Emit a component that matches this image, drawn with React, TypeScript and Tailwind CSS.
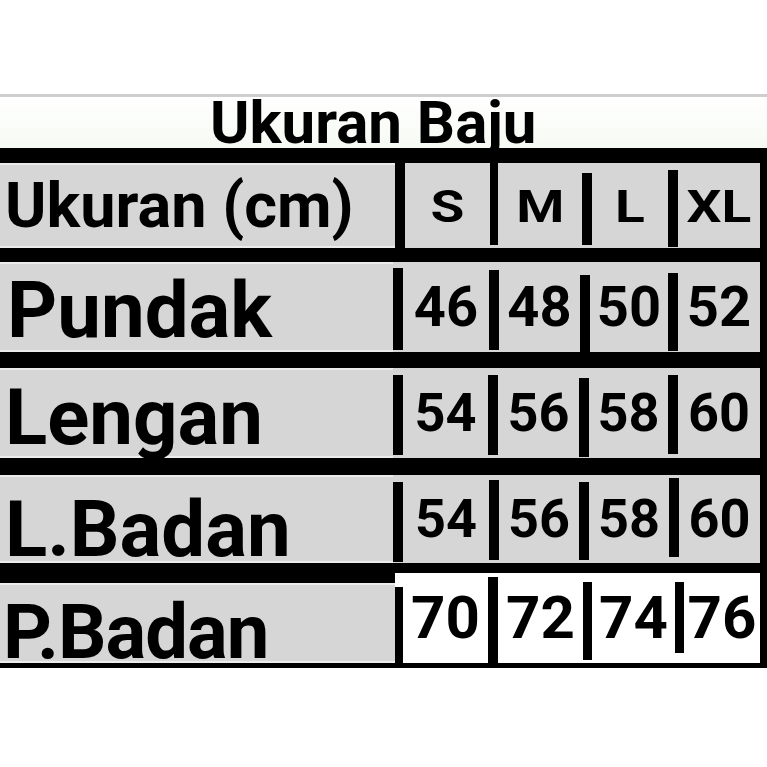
const font = { fontFamily: "Roboto, 'Liberation Sans', sans-serif" };

type Cell = { text: string; w: string };
type Bar = { w: string; inner: string };

type Row = {
  label: string;
  labelW: string;
  labelText: string;
  labelBox: string;
  h: string;
  gap: string;
  cellBg: string;
  valueText: string;
  cells: Cell[];
  bars: Bar[];
};

const rows: Row[] = [
  {
    label: "Ukuran (cm)",
    labelW: "w-[395px]",
    labelText: "text-[63px] pl-[5px]",
    labelBox: "h-[85px]",
    h: "h-[85px]",
    gap: "mt-0",
    cellBg: "bg-[#d6d6d6]",
    valueText: "text-[44px] pt-[2px] scale-x-125",
    cells: [
      { text: "S", w: "w-[85px]" },
      { text: "M", w: "w-[84px]" },
      { text: "L", w: "w-[76px]" },
      { text: "XL", w: "w-[82px]" },
    ],
    bars: [
      { w: "w-[10px]", inner: "mt-0 h-[85px]" },
      { w: "w-[8px]", inner: "mt-0 h-[82px]" },
      { w: "w-[10px]", inner: "mt-[10px] h-[72px]" },
      { w: "w-[10px]", inner: "mt-[7px] h-[77px]" },
    ],
  },
  {
    label: "Pundak",
    labelW: "w-[393px]",
    labelText: "text-[78px] pl-[7px] pt-[8px]",
    labelBox: "h-[90px]",
    h: "h-[90px]",
    gap: "mt-[14px]",
    cellBg: "bg-[#d6d6d6]",
    valueText: "text-[56px]",
    cells: [
      { text: "46", w: "w-[86px]" },
      { text: "48", w: "w-[81px]" },
      { text: "50", w: "w-[78px]" },
      { text: "52", w: "w-[82px]" },
    ],
    bars: [
      { w: "w-[10px]", inner: "mt-[6px] h-[82px]" },
      { w: "w-[10px]", inner: "mt-[8px] h-[80px]" },
      { w: "w-[10px]", inner: "mt-[13px] h-[77px]" },
      { w: "w-[10px]", inner: "mt-[11px] h-[78px]" },
    ],
  },
  {
    label: "Lengan",
    labelW: "w-[393px]",
    labelText: "text-[78px] pl-[5px] pt-[10px]",
    labelBox: "h-[90px]",
    h: "h-[90px]",
    gap: "mt-[16px]",
    cellBg: "bg-[#d6d6d6]",
    valueText: "text-[54px]",
    cells: [
      { text: "54", w: "w-[85px]" },
      { text: "56", w: "w-[81px]" },
      { text: "58", w: "w-[79px]" },
      { text: "60", w: "w-[82px]" },
    ],
    bars: [
      { w: "w-[10px]", inner: "mt-[7px] h-[80px]" },
      { w: "w-[10px]", inner: "mt-[7px] h-[80px]" },
      { w: "w-[10px]", inner: "mt-[10px] h-[79px]" },
      { w: "w-[10px]", inner: "mt-[7px] h-[79px]" },
    ],
  },
  {
    label: "L.Badan",
    labelW: "w-[393px]",
    labelText: "text-[78px] pl-[5px] pt-[22px]",
    labelBox: "h-[88px]",
    h: "h-[88px]",
    gap: "mt-[17px]",
    cellBg: "bg-[#d6d6d6]",
    valueText: "text-[54px]",
    cells: [
      { text: "54", w: "w-[86px]" },
      { text: "56", w: "w-[80px]" },
      { text: "58", w: "w-[80px]" },
      { text: "60", w: "w-[81px]" },
    ],
    bars: [
      { w: "w-[10px]", inner: "mt-[7px] h-[80px]" },
      { w: "w-[10px]", inner: "mt-[5px] h-[80px]" },
      { w: "w-[10px]", inner: "mt-[7px] h-[78px]" },
      { w: "w-[10px]", inner: "mt-[3px] h-[79px]" },
    ],
  },
  {
    label: "P.Badan",
    labelW: "w-[395px]",
    labelText: "text-[76px] pl-[3px] pt-[18px] tracking-[-1px]",
    labelBox: "mt-[10px] h-[80px]",
    h: "h-[90px]",
    gap: "mt-[10px]",
    cellBg: "bg-white",
    valueText: "text-[60px]",
    cells: [
      { text: "70", w: "w-[85px]" },
      { text: "72", w: "w-[85px]" },
      { text: "74", w: "w-[83px]" },
      { text: "76", w: "w-[76px]" },
    ],
    bars: [
      { w: "w-[8px]", inner: "mt-[14px] h-[76px]" },
      { w: "w-[10px]", inner: "mt-[4px] h-[86px]" },
      { w: "w-[9px]", inner: "mt-[9px] h-[78px]" },
      { w: "w-[9px]", inner: "mt-[9px] h-[71px]" },
    ],
  },
];

export default function App() {
  return (
    <div className="w-[767px] h-[767px] bg-white overflow-hidden text-black" style={font}>
      <div className="h-[94px]" />
      <div className="h-[3px] bg-[#cfcfcf]" />

      {/* Title */}
      <div className="h-[51px] pl-[210px] bg-gradient-to-b from-white to-[#f6faf3]">
        <h1 className="text-[60px] leading-[51px] font-bold whitespace-nowrap">Ukuran Baju</h1>
      </div>

      {/* Table */}
      <div className="bg-black pt-[15px] pb-[5px] pr-[7px] flex flex-col">
        {rows.map((row) => (
          <div key={row.label} className={`flex ${row.h} ${row.gap}`}>
            <div
              className={`${row.labelW} ${row.labelBox} shrink-0 bg-[#d6d6d6] border-y-2 border-[#ececec] flex items-center font-bold leading-none whitespace-nowrap`}
            >
              <span className={row.labelText}>{row.label}</span>
            </div>
            {row.cells.map((cell, i) => (
              <div key={cell.text} className="flex">
                <div className={`${row.bars[i].w} ${row.cellBg} shrink-0`}>
                  <div className={`${row.bars[i].inner} bg-black`} />
                </div>
                <div
                  className={`${cell.w} ${row.cellBg} shrink-0 flex items-center justify-center font-bold leading-none`}
                >
                  <span className={row.valueText}>{cell.text}</span>
                </div>
              </div>
            ))}
          </div>
        ))}
      </div>
    </div>
  );
}
